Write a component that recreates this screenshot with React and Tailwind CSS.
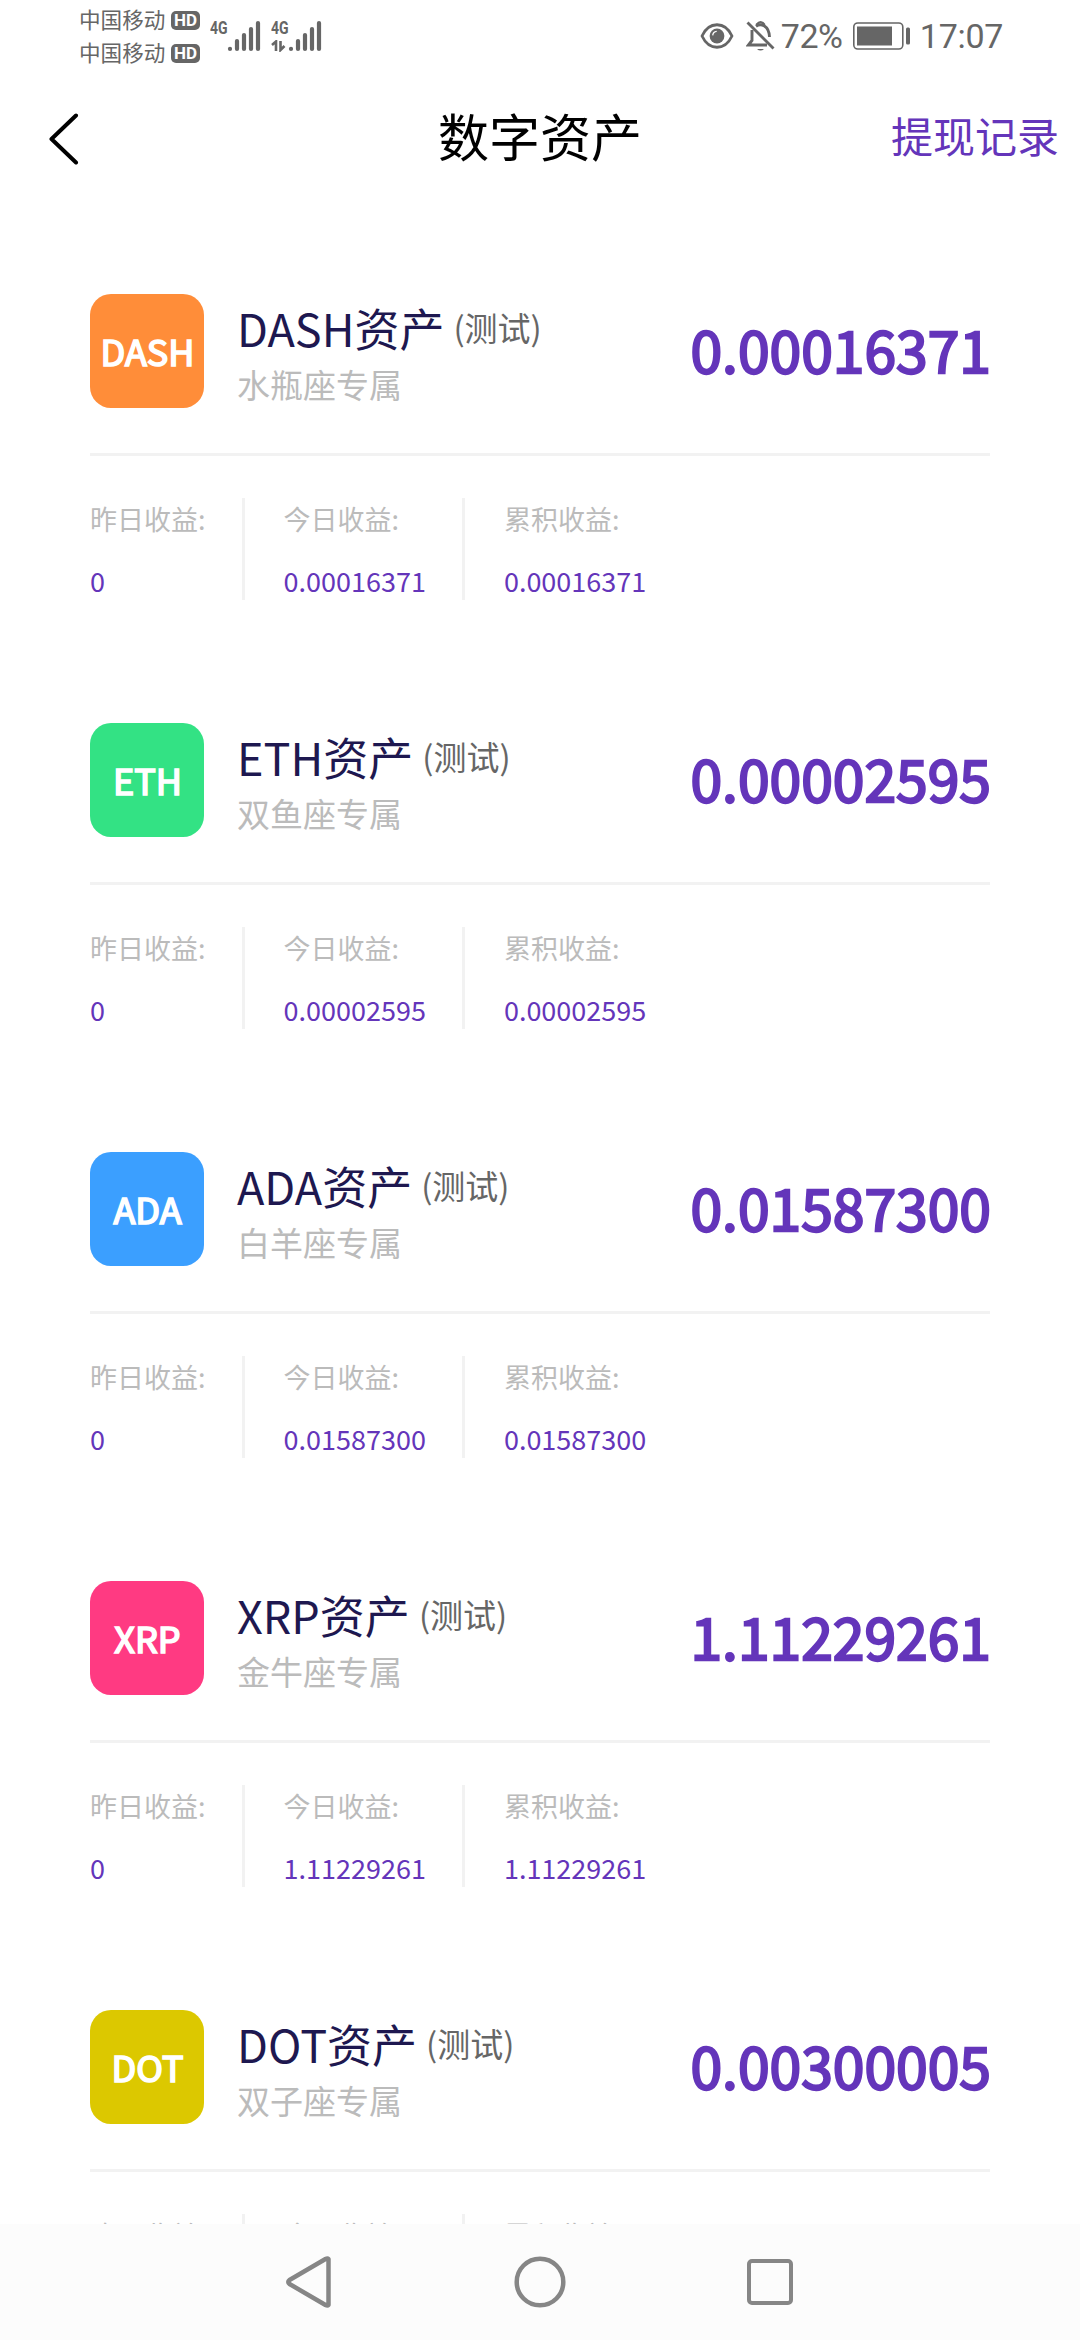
import clsx from "clsx";

const assets = [
  {
    symbol: "DASH",
    sign: "水瓶座专属",
    color: "bg-[#ff8d39]",
    yesterday: "0",
    today: "0.00016371",
    total: "0.00016371",
  },
  {
    symbol: "ETH",
    sign: "双鱼座专属",
    color: "bg-[#33e284]",
    yesterday: "0",
    today: "0.00002595",
    total: "0.00002595",
  },
  {
    symbol: "ADA",
    sign: "白羊座专属",
    color: "bg-[#3b9fff]",
    yesterday: "0",
    today: "0.01587300",
    total: "0.01587300",
  },
  {
    symbol: "XRP",
    sign: "金牛座专属",
    color: "bg-[#ff3a82]",
    yesterday: "0",
    today: "1.11229261",
    total: "1.11229261",
  },
  {
    symbol: "DOT",
    sign: "双子座专属",
    color: "bg-[#dcc800]",
    yesterday: "0",
    today: "0.00300005",
    total: "0.00300005",
  },
];

function Carrier() {
  return (
    <div className="flex h-[33px] items-center">
      <span className="w-[92px] pb-[3px] text-[21.6px] leading-[30px] whitespace-nowrap">
        中国移动
      </span>
      <span className="flex h-[19px] w-[29px] items-center justify-center rounded-[5px] bg-[#666] font-[Roboto] text-[17px] leading-none font-bold text-white">
        HD
      </span>
    </div>
  );
}

function Signal({ data }) {
  return (
    <div className="relative h-[34px] w-[61px]">
      <span className="absolute top-0 left-0 origin-left scale-x-[0.78] font-[Roboto] text-[18px] leading-[15px] font-bold">
        4G
      </span>
      {data && (
        <svg
          className="absolute top-[20px] left-0"
          width="16"
          height="12"
          viewBox="0 0 16 12"
          fill="none"
          stroke="#666"
          strokeWidth="2.6"
        >
          <path d="M1 5 5 1.5V11M9.5 1v9l4-4" />
        </svg>
      )}
      <svg
        className="absolute top-0 left-[17px]"
        width="36"
        height="32"
        viewBox="0 0 36 32"
        stroke="#666"
        strokeWidth="4.2"
        strokeLinecap="round"
      >
        <path d="M3 28.8v.1M10 21v7.9M17 15v13.9M24 9v19.9M31 3v25.9" />
      </svg>
    </div>
  );
}

function StatusBar() {
  return (
    <div className="flex h-[75px] justify-between pr-[77px] pl-[79px] text-[#666]">
      <div className="flex">
        <div className="pt-[4px]">
          <Carrier />
          <Carrier />
        </div>
        <div className="flex pt-[20px] pl-[10px]">
          <Signal />
          <Signal data />
        </div>
      </div>
      <div className="flex h-[72px] items-center">
        <svg width="34" height="28" viewBox="0 0 34 28" fill="none">
          <path
            d="M2 14C9 -1 25 -1 32 14C25 29 9 29 2 14Z"
            stroke="#666"
            strokeWidth="2.8"
            strokeLinejoin="round"
          />
          <circle cx="17" cy="14" r="7.4" fill="#666" />
          <path
            d="M12.7 13.4a4.5 4.5 0 0 1 4-4"
            stroke="white"
            strokeWidth="1.3"
          />
        </svg>
        <svg
          className="ml-[12px]"
          width="29"
          height="32"
          viewBox="0 0 29 32"
          fill="none"
          stroke="#666"
          strokeWidth="2.9"
        >
          <path d="M1.5 2.5 27.5 28.5" />
          <path d="M6 10v10.5L2.5 25H21" />
          <path d="M10 6.2C15 2.8 23 5.5 23.5 17" />
          <path d="M11 5.2V4.2Q14.5 0 18 4.2V5.2" strokeWidth="2.4" />
          <path d="M11 29Q14.5 32 18 29Z" fill="#666" stroke="none" />
        </svg>
        <span className="ml-[6px] w-[70px] font-[Roboto] text-[34px] leading-[40px] tracking-[-0.5px]">
          72%
        </span>
        <svg width="60" height="28" viewBox="0 0 60 28" fill="none">
          <rect
            x="2.8"
            y="1"
            width="49"
            height="26"
            rx="4"
            stroke="#666"
            strokeWidth="1.6"
          />
          <rect x="6" y="4.5" width="35" height="19" fill="#666" />
          <rect x="55" y="5.5" width="4" height="17" rx="1.5" fill="#666" />
        </svg>
        <span className="ml-[9px] font-[Roboto] text-[34px] leading-[40px] tracking-[-0.3px]">
          17:07
        </span>
      </div>
    </div>
  );
}

function Header() {
  return (
    <header className="grid h-[122px] grid-cols-3 items-center pr-[21px] pl-[46px]">
      <svg
        className="mt-[3px]"
        width="36"
        height="54"
        viewBox="0 0 36 54"
        fill="none"
        stroke="black"
        strokeWidth="4"
        strokeLinecap="round"
        strokeLinejoin="round"
      >
        <path d="M30 4.5 5.5 28 30 51.5" />
      </svg>
      <h1 className="-mt-[3px] -ml-[25px] text-center text-[51px] leading-[60px] text-black">
        数字资产
      </h1>
      <a className="-mt-[2px] text-right text-[42px] leading-[60px] text-[#6435ba]">
        提现记录
      </a>
    </header>
  );
}

function Stat({ label, value }) {
  return (
    <div className="flex flex-col pt-[2px] text-[27px]">
      <span className="h-[38px] leading-[38px] text-[#bbb]">{label}</span>
      <span className="mt-[24px] h-[38px] leading-[38px] text-[#6435ba]">
        {value}
      </span>
    </div>
  );
}

function AssetCard({ asset }) {
  return (
    <section className="mx-[90px] h-[429px]">
      <div className="flex h-[162px] items-start border-b-[3px] border-[#f2f2f2]">
        <div
          className={clsx(
            "flex size-[114px] shrink-0 items-center justify-center rounded-[21px] pb-[3px] pl-px text-[36px] leading-[50px] text-white [-webkit-text-stroke:1.7px_white]",
            asset.color
          )}
        >
          {asset.symbol}
        </div>
        <div className="ml-[33px] flex-1">
          <div className="flex h-[66px] items-center">
            <span className="pt-[2px] text-[45px] leading-[64px] text-[#1e1850]">
              {asset.symbol}资产
            </span>
            <span className="ml-[9px] text-[33px] leading-[48px] text-[#666]">
              (测试)
            </span>
          </div>
          <div className="h-[48px] text-[33px] leading-[48px] text-[#bbb]">
            {asset.sign}
          </div>
        </div>
        <div className="-mr-px text-[57px] leading-[109px] text-[#6435ba] [-webkit-text-stroke:2.3px_#6435ba]">
          {asset.total}
        </div>
      </div>
      <div className="mt-[42px] flex h-[102px]">
        <Stat label="昨日收益:" value={asset.yesterday} />
        <div className="mr-[39px] ml-[36px] w-[3px] bg-[#f2f2f2]" />
        <Stat label="今日收益:" value={asset.today} />
        <div className="mr-[39px] ml-[36px] w-[3px] bg-[#f2f2f2]" />
        <Stat label="累积收益:" value={asset.total} />
      </div>
    </section>
  );
}

function NavBar() {
  return (
    <nav className="flex h-[116px] shrink-0 items-center justify-center gap-[180px] bg-[#fcfcfc]">
      <svg
        width="52"
        height="56"
        viewBox="0 0 52 56"
        fill="none"
        stroke="#868686"
        strokeWidth="4.5"
        strokeLinejoin="round"
      >
        <path d="M46.500 5V51Q45.500 52 43.500 51L7.500 30Q5 28 7.500 26L43.500 5Q45.500 4 46.500 5Z" />
      </svg>
      <svg
        width="52"
        height="56"
        viewBox="0 0 52 56"
        fill="none"
        stroke="#868686"
        strokeWidth="4.5"
      >
        <circle cx="26" cy="28" r="23.300" />
      </svg>
      <div className="mr-[5px] ml-px size-[46px] rounded-[5px] border-[4.500px] border-[#868686]" />
    </nav>
  );
}

export default function App() {
  return (
    <div className="flex h-[2340px] w-[1080px] flex-col overflow-hidden bg-white font-['Noto_Sans_CJK_SC',sans-serif]">
      <StatusBar />
      <Header />
      <main className="min-h-0 flex-1 overflow-hidden pt-[97px]">
        {assets.map((asset) => (
          <AssetCard key={asset.symbol} asset={asset} />
        ))}
      </main>
      <NavBar />
    </div>
  );
}
